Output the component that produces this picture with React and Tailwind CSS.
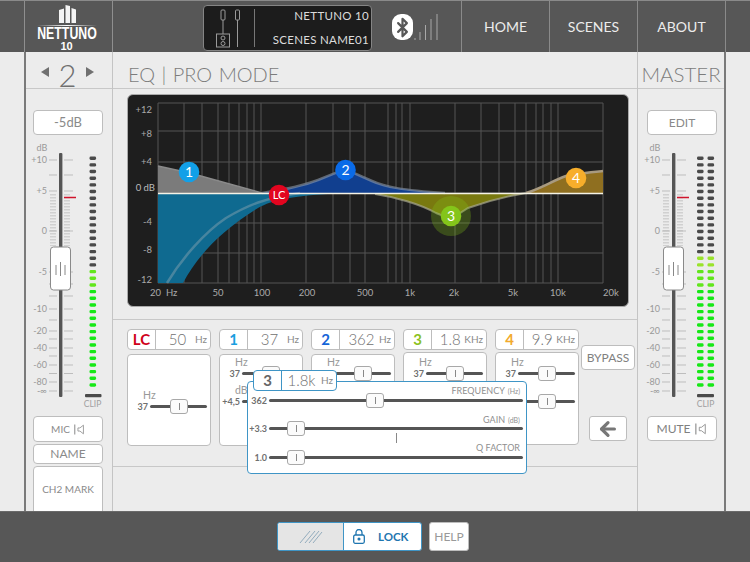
import { ArrowLeft, Bluetooth } from 'lucide-react';

const SCALE = [
  [160, '+10'], [175], [191, '+5'], [231, '0'], [272, '-5'], [284], [296], [309, '-10'], [320],
  [331, '-20'], [339], [348, '-40'], [356], [365, '-60'], [373.5], [382, '-80'], [391, '-∞'],
];

const H_LINES = [103, 131, 162, 193, 223, 253, 283];
const V_LINES = [158, 184, 202, 218, 229, 239, 247, 254, 261, 306, 333, 350, 365, 388, 396, 402, 410, 455, 481, 499, 515, 526, 536, 543, 551, 558, 603];
const DB_LABELS = [['+12', 113], ['+8', 137], ['+4', 165], ['-4', 225], ['-8', 253], ['-12', 283]];
const HZ_LABELS = [['50', 218], ['100', 262], ['200', 307], ['500', 365], ['1k', 410], ['2k', 454], ['5k', 513], ['10k', 558], ['20k', 611]];
const NODES = [
  ['1', 189, 172, '#12a0e8'],
  ['2', 345.5, 170, '#0a6be8'],
  ['3', 451, 216, '#84c51a'],
  ['4', 576, 178, '#f7ae2b'],
  ['LC', 279, 195, '#e2051f'],
];

function meterColor(i, dark, lime) {
  if (i < dark) return '#4a4a4a';
  if (i < dark + lime) return '#9ae32c';
  if (i < dark + lime + 3) return '#62e61c';
  return '#16e816';
}

function Fader({ ox, meters, dark, lime }) {
  const dots = Array.from({ length: 35 }, (_, i) => i);
  return (
    <svg width="86" height="270" viewBox={`${ox} 140 86 270`} className="block">
      <text x="42" y="151" fontSize="9" textAnchor="middle" fill="#999">dB</text>
      {SCALE.map(([y, label]) => (
        <g key={y}>
          <line x1="49" x2="57" y1={y} y2={y} stroke="#bdbdbd" strokeWidth="1" />
          <line x1="64" x2="73" y1={y} y2={y} stroke="#bdbdbd" strokeWidth="1" />
          {label && <text x="47" y={y + 3} fontSize="9" textAnchor="end" fill="#999">{label}</text>}
        </g>
      ))}
      {[51, 53, 55, 65, 67, 69].map((x) => (
        <line key={x} x1={x} x2={x} y1="194" y2="246" stroke="#b5b5b5" strokeWidth="1" strokeDasharray="1.5 1.5" />
      ))}
      <line x1="64" x2="76" y1="197.5" y2="197.5" stroke="#d0142c" strokeWidth="1.5" />
      <rect x="59" y="153" width="3.4" height="244" rx="1" fill="#555" />
      <rect x="50.5" y="247" width="20" height="43" rx="3" fill="#fff" stroke="#8a8a8a" />
      {[56, 60.5, 65].map((x, i) => (
        <line key={x} x1={x} x2={x} y1={i === 1 ? 262 : 265} y2={i === 1 ? 276 : 275} stroke="#888" strokeWidth="1" />
      ))}
      {meters.map((mx) => (
        <g key={mx}>
          {dots.map((i) => (
            <rect key={i} x={mx} y={156.5 + i * 6.67} width="6.6" height="3.4" rx="1.4" fill={meterColor(i, dark, lime)} />
          ))}
        </g>
      ))}
      <rect x={meters[0] - (meters.length > 1 ? 0 : 4.5)} y="394" width={meters.length > 1 ? 17 : 16.5} height="3.2" rx="1" fill="#4a4a4a" />
      <text x="92.5" y="407" fontSize="8.5" textAnchor="middle" fill="#a0a0a0">CLIP</text>
    </svg>
  );
}

function Speaker({ className }) {
  return (
    <svg viewBox="0 0 14 14" className={className} fill="none" stroke="#8a8a8a" strokeWidth="1">
      <line x1="1" x2="1" y1="0.5" y2="13.5" strokeWidth="1.3" />
      <path d="M5 5h2.5L12 1.5v11L7.500 9H5z" />
    </svg>
  );
}

function Slider({ value, knob, valueWidth = 'w-5', endClass = 'mr-[3px]' }) {
  return (
    <div className="flex items-center h-2">
      <span className={`${valueWidth} shrink-0 text-right text-[9px] font-bold text-[#707070] leading-none`}>{value}</span>
      <div className={`relative flex-1 h-[3px] ml-[2px] rounded-sm bg-[#555] ${endClass}`}>
        <div className={`absolute top-[-6px] w-[18px] h-[15px] flex items-center justify-center bg-[#fbfbfb] border border-[#a8a8a8] rounded-[3px] ${knob}`}>
          <div className="w-px h-[7px] bg-[#888]" />
        </div>
      </div>
    </div>
  );
}

function Band({ name, color, value, unit, single, panelClass }) {
  return (
    <div className="w-[84px]">
      <div className="flex h-[21px] bg-white border border-[#bdbdbd] rounded-[4px] items-center">
        <span className={`w-[28px] h-full flex items-center justify-center border-r border-[#bdbdbd] text-[15px] font-bold ${color}`}>{name}</span>
        <span className="flex-1 pl-[4px] text-center text-[15px] font-light text-[#707070]">{value}</span>
        <span className="pr-[3px] text-[10px] text-[#8a8a8a]">{unit}</span>
      </div>
      <div className={`bg-white border border-[#bdbdbd] rounded-[4px] flex flex-col ${panelClass}`}>
        <div className="pl-[15px] text-[10.500px] leading-[10px] text-[#999]">Hz</div>
        <div className="mt-[2px]"><Slider value="37" knob="left-[20px]" /></div>
        {!single && (
          <>
            <div className="pl-[15px] mt-[8px] text-[10.500px] leading-[10px] text-[#999]">dB</div>
            <div className="mt-[2px]"><Slider value="+4,5" knob="left-[20px]" /></div>
          </>
        )}
      </div>
    </div>
  );
}

function Graph() {
  return (
    <svg width="502" height="213" viewBox="127 94 502 213" className="block">
      {H_LINES.map((y) => <line key={y} x1="158" x2="603" y1={y} y2={y} stroke="#555" strokeWidth="1" />)}
      {V_LINES.map((x) => <line key={x} x1={x} x2={x} y1="103" y2="283" stroke="#555" strokeWidth="1" />)}

      <path d="M158 166 L190 173 L262 193 L158 193 Z" fill="#7b7b7b" />
      <path d="M158 193 V283 H183 C198 255 222 230 258 208 C272 200 295 195 340 193.500 Z" fill="#0f6a90" />
      <path d="M262 193 C282 190 300 187 318 180 L345 169 L372 181 C385 187 402 190 445 193 Z" fill="#113f8f" />
      <path d="M375 194 C395 197 420 204 436 213 L451 219 L468 208 C488 201 508 196 526 193.500 Z" fill="#79790f" />
      <path d="M526 193.500 C542 188 552 181 566 176 C580 173 592 172 603 171 V193.500 Z" fill="#8f6f20" />

      <path d="M167 283 C182 258 205 232 226 218 C248 205 265 198 300 193" fill="none" stroke="#8fa6b2" strokeOpacity="0.45" strokeWidth="2.5" />
      <path d="M158 166 L190 173 L262 193" fill="none" stroke="#8a8a8a" strokeWidth="1.500" />
      <path d="M262 193 C282 190 300 187 318 180 L345 169 L372 181 C385 187 402 190 445 193" fill="none" stroke="#8e9aa8" strokeOpacity="0.6" strokeWidth="2.5" />
      <path d="M375 194 C395 197 420 204 436 213 L451 219 L468 208 C488 201 508 196 526 193" fill="none" stroke="#a8a890" strokeOpacity="0.7" strokeWidth="2" />
      <path d="M526 193 C542 188 552 181 566 176 C580 173 592 172 603 171" fill="none" stroke="#a89a80" strokeWidth="2.5" />

      <line x1="158" x2="603" y1="193.500" y2="193.500" stroke="#f5f3e6" strokeWidth="1.500" />

      <circle cx="451" cy="216" r="20" fill="#84c51a" fillOpacity="0.28" />
      {NODES.map(([label, x, y, color]) => (
        <g key={label}>
          <circle cx={x} cy={y} r="10.300" fill={color} />
          <text x={x} y={y + (label === 'LC' ? 4 : 5)} fontSize={label === 'LC' ? 11 : 14} textAnchor="middle" fill="#fff">{label}</text>
        </g>
      ))}

      {DB_LABELS.map(([t, y]) => <text key={t} x="152" y={y} fontSize="9.500" textAnchor="end" fill="#aaa">{t}</text>)}
      <text x="155" y="190.500" fontSize="9.500" textAnchor="end" fill="#bbb">0 dB</text>
      <text x="150" y="296" fontSize="9.500" fill="#aaa" xmlSpace="preserve">20  Hz</text>
      {HZ_LABELS.map(([t, x]) => <text key={t} x={x} y="296" fontSize="9.500" textAnchor="middle" fill="#aaa">{t}</text>)}
    </svg>
  );
}

function Logo() {
  return (
    <div className="flex flex-col items-center w-full pr-[4px]">
      <svg width="60" height="25" viewBox="36 2 60 25" className="mt-[2px] block">
        <defs>
          <linearGradient id="fade">
            <stop offset="0" stopColor="#fff" stopOpacity="0" />
            <stop offset="0.5" stopColor="#fff" />
            <stop offset="1" stopColor="#fff" stopOpacity="0" />
          </linearGradient>
        </defs>
        <path d="M58 9l5-1.500V22h-5zM64.500 4l4.500 1v17h-4.500zM70.500 7l4.500 1.500V22h-4.500z" fill="#f4f4f4" />
        <rect x="36" y="24" width="60" height="1" fill="url(#fade)" />
      </svg>
      <div className="mt-[-1px] w-[78px] text-center text-[16px] leading-[13px] font-bold text-white scale-x-[0.77] [font-family:'Liberation_Sans',sans-serif]">NETTUNO</div>
      <div className="mt-[1px] text-[11px] leading-[11px] font-bold text-white [font-family:'Liberation_Sans',sans-serif]">10</div>
    </div>
  );
}

function Header() {
  return (
    <header className="flex h-[52px] shrink-0 bg-[#575757] border-t border-[#8a8a8a]">
      <div className="w-6 shrink-0" />
      <div className="w-[89px] shrink-0 border-l border-r border-[#8f8f8f]">
        <Logo />
      </div>
      <div className="w-[349px] shrink-0 flex items-center border-r border-[#8a8a8a]">
        <div className="ml-[90px] mt-[3px] flex w-[169px] h-[46px] bg-[#1c1c1c] border border-[#858585] rounded-[4px]">
          <svg width="50" height="44" viewBox="204 5 50 44" className="block shrink-0" fill="none" stroke="#9a9a9a" strokeWidth="1">
            <rect x="221" y="9" width="4" height="10" rx="1" />
            <rect x="235.500" y="9" width="4" height="10" rx="1" />
            <line x1="223" x2="223" y1="19" y2="33" />
            <line x1="237.500" x2="237.500" y1="19" y2="46" />
            <rect x="216.500" y="33" width="13" height="13" />
            <circle cx="223" cy="37" r="2" />
            <circle cx="223" cy="42.500" r="2" />
          </svg>
          <div className="flex-1 border-l border-[#777] my-[3px] flex flex-col justify-between items-end pr-[2px] text-[11.500px] leading-[14px] tracking-[0.3px] text-[#dcdcdc]">
            <span>NETTUNO 10</span>
            <span>SCENES NAME01</span>
          </div>
        </div>
        <div className="ml-[20px] mt-[1px] w-[21px] h-[26px] rounded-[9px] bg-white flex items-center justify-center">
          <Bluetooth size={21} strokeWidth={2.5} color="#575757" />
        </div>
        <svg width="26" height="28" viewBox="415 13 26 28" className="block mt-[1px]" stroke="#a8a8a8" strokeWidth="1">
          <line x1="417" x2="417" y1="38" y2="40" />
          <line x1="422" x2="422" y1="32" y2="40" />
          <line x1="427.500" x2="427.500" y1="25" y2="40" />
          <line x1="433" x2="433" y1="19" y2="40" />
          <line x1="439" x2="439" y1="14" y2="40" />
        </svg>
      </div>
      {['HOME', 'SCENES', 'ABOUT'].map((t) => (
        <div key={t} className="w-[88px] shrink-0 flex items-center justify-center border-r border-[#8a8a8a] text-[14px] text-[#ececec]">{t}</div>
      ))}
    </header>
  );
}

function ChannelStrip() {
  return (
    <aside className="w-[89px] shrink-0 border-l-2 border-[#7a7a7a] border-r-1 border-r-[#c4c4c4] overflow-hidden">
      <div className="h-[37px] border-b border-[#c8c8c8] flex items-center justify-center pt-[4px] pr-[3px] text-[#707070]">
        <span className="w-0 h-0 border-y-[5px] border-y-transparent border-r-[8px] border-r-[#707070]" />
        <span className="mx-[10px] mt-[6px] text-[31px] leading-[28px] font-light">2</span>
        <span className="w-0 h-0 border-y-[5px] border-y-transparent border-l-[8px] border-l-[#707070]" />
      </div>
      <div className="ml-[7px] mt-[21px] w-[70px] h-[25px] flex items-center justify-center bg-white border border-[#bdbdbd] rounded-[4px] text-[13px] text-[#8a8a8a]">-5dB</div>
      <div className="mt-[5px]">
        <Fader ox={26} meters={[89.5]} dark={17} lime={0} />
      </div>
      <div className="ml-[7px] w-[70px] flex flex-col gap-[2px] mt-[6px]">
        <div className="h-[26px] flex items-center justify-center gap-[4px] bg-white border border-[#bdbdbd] rounded-[4px] text-[10px] text-[#8a8a8a]">
          MIC <Speaker className="w-[11px] h-[11px]" />
        </div>
        <div className="h-[20px] flex items-center justify-center bg-white border border-[#bdbdbd] rounded-[4px] text-[12px] text-[#8a8a8a]">NAME</div>
        <div className="h-[60px] pb-[13px] flex items-center justify-center bg-white border border-[#bdbdbd] rounded-[4px] text-[10px] text-[#8a8a8a]">CH2 MARK</div>
      </div>
    </aside>
  );
}

function EqPopover() {
  return (
    <>
      <div className="absolute left-[140px] top-[50px] z-20 flex items-center w-[84px] h-[21px] bg-white border border-[#3f95c6] rounded-[4px]">
        <span className="w-[28px] h-full flex items-center justify-center border-r border-[#3f95c6] text-[15px] font-bold text-[#666]">3</span>
        <span className="flex-1 text-center text-[15px] font-light text-[#707070]">1.8k</span>
        <span className="pr-[3px] text-[10px] text-[#8a8a8a]">Hz</span>
      </div>
      <div className="absolute left-[134px] top-[61px] z-10 w-[280px] h-[93px] bg-white border border-[#3f95c6] rounded-[4px] pt-[4px]">
        {[
          ['FREQUENCY', '(Hz)', '362', 'left-[97px]'],
          ['GAIN', '(dB)', '+3.3', 'left-[18px]'],
          ['Q FACTOR', '', '1.0', 'left-[18px]'],
        ].map(([label, unit, value, knob]) => (
          <div key={label} className="h-[28.500px]">
            <div className="h-[10px] pr-[6px] text-right text-[9px] leading-[10px] text-[#8f8f8f]">
              {label}{unit && <span className="text-[7px] ml-[3px]">{unit}</span>}
            </div>
            <Slider value={value} knob={knob} valueWidth="w-[19px]" endClass="mr-[3px]" />
          </div>
        ))}
        <div className="absolute left-[148px] top-[51px] w-px h-[10px] bg-[#888]" />
      </div>
    </>
  );
}

function Controls() {
  return (
    <section className="relative h-[147px] border-b border-[#c8c8c8] pl-[14px] pt-[9px] flex gap-2">
      <Band name="LC" color="text-[#d0021b]" value="50" unit="Hz" single panelClass="mt-[4px] h-[92px] justify-center" />
      <Band name="1" color="text-[#1a9ee0]" value="37" unit="Hz" panelClass="mt-[4px] h-[92px] pt-[2px]" />
      <Band name="2" color="text-[#1565d8]" value="362" unit="Hz" panelClass="mt-[4px] h-[92px] pt-[2px]" />
      <Band name="3" color="text-[#8cc21e]" value="1.8" unit="KHz" panelClass="mt-[2px] h-[93px] pt-[4px]" />
      <Band name="4" color="text-[#f2aa2e]" value="9.9" unit="KHz" panelClass="mt-[2px] h-[93px] pt-[4px]" />
      <div className="w-[54px] ml-[-6px] flex flex-col items-center pt-[16px]">
        <div className="w-[54px] h-[25px] flex items-center justify-center bg-white border border-[#bdbdbd] rounded-[4px] text-[12px] text-[#808080]">BYPASS</div>
        <div className="mt-[46px] w-[38px] h-[25px] flex items-center justify-center bg-white border border-[#bdbdbd] rounded-[3px]">
          <ArrowLeft size={22} strokeWidth={3.5} color="#777" />
        </div>
      </div>
      <EqPopover />
    </section>
  );
}

function Main() {
  return (
    <main className="w-[524px] shrink-0 flex flex-col">
      <div className="h-[37px] shrink-0 border-b border-[#c8c8c8] pl-[15px] pt-[8px] flex items-center text-[20px] font-light [word-spacing:1px] text-[#7c7c7c]">EQ | PRO MODE</div>
      <div className="h-[231px] shrink-0 border-b border-[#c8c8c8] pl-[14px] pt-[5px]">
        <div className="w-[502px] h-[213px] bg-[#1e1e1e] border border-[#aaa] rounded-[6px] overflow-hidden">
          <div className="m-[-1px]"><Graph /></div>
        </div>
      </div>
      <Controls />
    </main>
  );
}

function Master() {
  return (
    <aside className="w-[89px] shrink-0 border-l border-[#c4c4c4] border-r-2 border-r-[#7a7a7a]">
      <div className="h-[37px] border-b border-[#c8c8c8] pt-[8px] flex items-center justify-center text-[20.500px] font-light text-[#7c7c7c]">MASTER</div>
      <div className="ml-[9px] mt-[21px] w-[70px] h-[25px] flex items-center justify-center bg-white border border-[#bdbdbd] rounded-[4px] text-[12px] text-[#8a8a8a]">EDIT</div>
      <div className="mt-[5px]">
        <Fader ox={25} meters={[84, 94.5]} dark={15} lime={2} />
      </div>
      <div className="ml-[9px] mt-[6px] w-[70px] h-[25px] flex items-center justify-center gap-[5px] bg-white border border-[#bdbdbd] rounded-[4px] text-[12px] text-[#808080]">
        MUTE <Speaker className="w-[12px] h-[12px]" />
      </div>
    </aside>
  );
}

function Footer() {
  return (
    <footer className="h-[51px] shrink-0 bg-[#575757] border-t border-[#6a6a6a] flex items-start pl-[277px] pt-[10px] z-30">
      <div className="flex w-[145px] h-[29px] bg-white border border-[#3f95c6] rounded-[3px] overflow-hidden">
        <div className="w-[66px] bg-[#e5e5e5] border-r border-[#3f95c6] flex items-center justify-center">
          <svg width="24" height="14" viewBox="0 0 24 14" stroke="#7d9db3" strokeWidth="0.8">
            <path d="M1 13L11 1M6 13L16 1M10 13L20 1M14 13L23 2" />
          </svg>
        </div>
        <div className="flex-1 flex items-center pl-[9px]">
          <svg width="12" height="15" viewBox="0 0 12 15" fill="none" stroke="#1f76b0" strokeWidth="1.300">
            <rect x="0.700" y="6" width="10.600" height="8.300" rx="1.500" />
            <path d="M3 6V3.500a3 3 0 0 1 6 0V6" />
            <circle cx="6" cy="10" r="0.900" fill="#1f76b0" />
          </svg>
          <span className="ml-[13px] text-[11.500px] font-bold text-[#1f76b0]">LOCK</span>
        </div>
      </div>
      <div className="ml-[7px] w-[40px] h-[29px] flex items-center justify-center bg-white border border-[#bdbdbd] rounded-[3px] text-[12px] text-[#999]">HELP</div>
    </footer>
  );
}

export default function App() {
  return (
    <div className="w-[750px] h-[562px] flex flex-col overflow-hidden bg-[#ececec] [font-family:Lato,sans-serif]">
      <Header />
      <div className="flex h-[459px] shrink-0 overflow-hidden">
        <div className="w-6 shrink-0" />
        <ChannelStrip />
        <Main />
        <Master />
      </div>
      <Footer />
    </div>
  );
}
